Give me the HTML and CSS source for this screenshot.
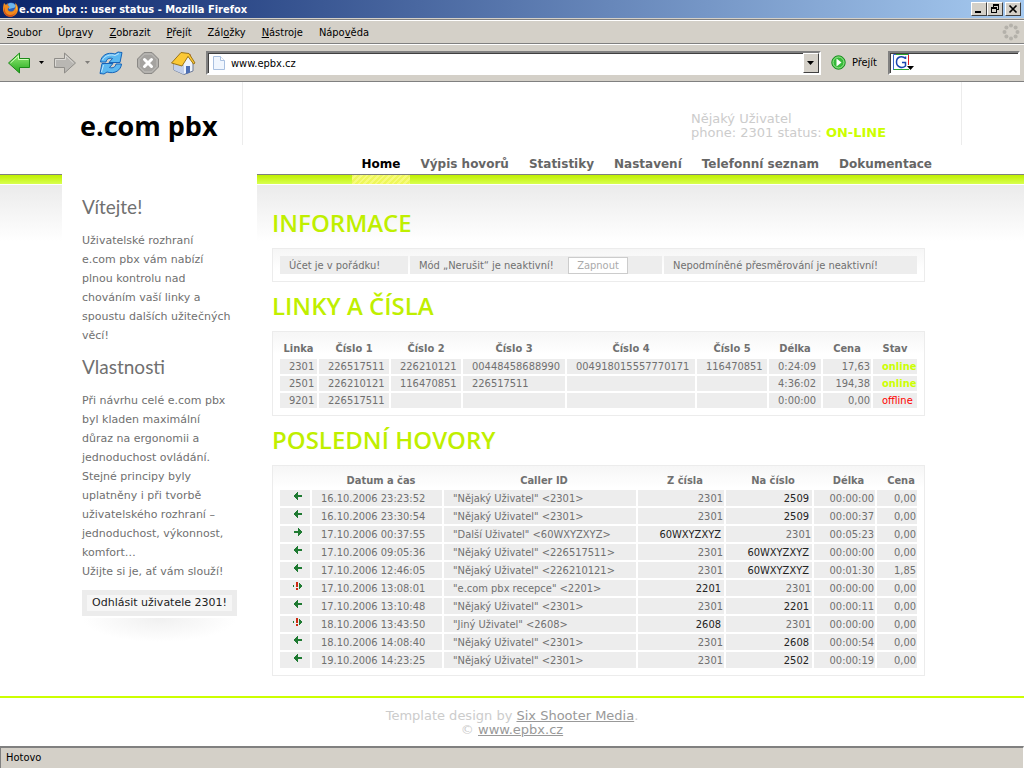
FILE: index.html
```html
<!DOCTYPE html>
<html lang="cs">
<head>
<meta charset="utf-8">
<title>e.com pbx :: user status</title>
<link rel="stylesheet" href="styles.css">
</head>
<body>
<div class="window">
  <div class="titlebar">
    <svg class="app-icon" width="17" height="17" viewBox="0 0 17 17" aria-hidden="true">
      <circle cx="9" cy="8" r="6.5" fill="#2b5fb8"/>
      <path d="M6 3c2-2 6-1 7 1 1 1 0 3-2 3-2 0-2 1-4 1z" fill="#6db5ec"/>
      <path d="M2 2l2 2 2-2c-1 2 0 3 2 4-1 1-3 1-2 3s5 2 6 0c2-2 2-5 1-7 3 2 4 6 2 10-2 3-6 5-10 3C1 13 0 8 2 2z" fill="#f08a1c"/>
      <path d="M3 6c-1 4 1 8 5 8 3 0 5-1 6-4-1 5-5 7-9 5-3-2-4-6-2-9z" fill="#d0501a"/>
      <path d="M13 3c2 2 2 4 1 7 0-3 0-5-1-7z" fill="#ffd75a"/>
    </svg>
    <span class="window-title">e.com pbx :: user status - Mozilla Firefox</span>
    <div class="window-buttons">
      <button class="win-btn" type="button" aria-label="Minimalizovat"><svg width="12" height="10" viewBox="0 0 12 10"><path d="M2 7h6v2H2z"/></svg></button>
      <button class="win-btn" type="button" aria-label="Obnovit"><svg width="12" height="10" viewBox="0 0 12 10"><path d="M4 0h6v6H8V5h1V2H5v1H4zM2 3h6v6H2zM3 5v3h4V5z" fill-rule="evenodd"/></svg></button>
      <button class="win-btn win-close" type="button" aria-label="Zavřít"><svg width="12" height="10" viewBox="0 0 12 10"><path d="M2.500 1.500l7 7M9.500 1.500l-7 7" stroke="#000" stroke-width="1.700"/></svg></button>
    </div>
  </div>

  <div class="menubar">
    <button type="button"><u>S</u>oubor</button>
    <button type="button">Úpr<u>a</u>vy</button>
    <button type="button"><u>Z</u>obrazit</button>
    <button type="button"><u>P</u>řejít</button>
    <button type="button">Zál<u>o</u>žky</button>
    <button type="button"><u>N</u>ástroje</button>
    <button type="button">Nápo<u>v</u>ěda</button>
    <svg class="throbber" width="18" height="18" viewBox="0 0 18 18" fill="#b4b1aa" aria-hidden="true">
      <circle cx="9" cy="2.500" r="2"/><circle cx="13.600" cy="4.400" r="2"/><circle cx="15.500" cy="9" r="2"/><circle cx="13.600" cy="13.600" r="2"/>
      <circle cx="9" cy="15.500" r="2"/><circle cx="4.400" cy="13.600" r="2"/><circle cx="2.500" cy="9" r="2"/><circle cx="4.400" cy="4.400" r="2"/>
    </svg>
  </div>

  <div class="toolbar">
    <button class="tool" type="button" aria-label="Zpět">
      <svg width="24" height="24" viewBox="0 0 24 24"><defs><linearGradient id="gb" x2="0" y2="1"><stop offset="0" stop-color="#9cf07c"/><stop offset="1" stop-color="#22a81c"/></linearGradient></defs><path d="M1.500 12L12.500 2v5.500H22.500v9H12.500V22z" fill="url(#gb)" stroke="#1d8a1a" stroke-linejoin="round"/><path d="M3.500 12l8-7.200v3.700h10" fill="none" stroke="#d2ffbe"/></svg>
    </button>
    <button class="drop" type="button" aria-label="Historie zpět"><svg width="5" height="3" viewBox="0 0 5 3"><path d="M0 0h5L2.500 3z"/></svg></button>
    <button class="tool" type="button" aria-label="Vpřed">
      <svg width="24" height="24" viewBox="0 0 24 24"><path d="M22.500 12L11.500 2v5.500H1.500v9h10V22z" fill="#b9b7b3" stroke="#8f8d89" stroke-linejoin="round"/><path d="M2.500 15V8.500h10v-4l8 7.500" fill="none" stroke="#dcdad6"/></svg>
    </button>
    <button class="drop" type="button" aria-label="Historie vpřed"><svg width="5" height="3" viewBox="0 0 5 3"><path fill="#807e7a" d="M0 0h5L2.500 3z"/></svg></button>
    <button class="tool tool-reload" type="button" aria-label="Obnovit stránku">
      <svg width="24" height="24" viewBox="0 0 24 24"><g fill="#5cb8f0" stroke="#1563b8" stroke-linejoin="round"><path d="M1.500 11C2 5 8 .500 16 3l3-2 4 .500-2 10H10l3.500-4C10 6.500 7.500 8 7 11z"/><path d="M22.500 13c-.500 6-6.500 10.500-14.500 8l-3 2-4-.500 2-10h11L10.500 16.500c3.500 1 6-.500 6.500-3.500z"/></g><path d="M3.500 9C6 4.500 11 3 16 4.500l4-2M4.500 14l-2 7" fill="none" stroke="#bfe6ff"/></svg>
    </button>
    <button class="tool" type="button" aria-label="Zastavit">
      <svg width="24" height="24" viewBox="0 0 24 24"><path d="M8 1.500h8L22.500 8v8L16 22.500H8L1.500 16V8z" fill="#a5a3a0" stroke="#8a8885"/><path d="M8.500 3h7L21 8.500v7L15.500 21h-7L3 15.500v-7z" fill="none" stroke="#c3c1bd"/><path d="M8.500 8.500l7 7M15.500 8.500l-7 7" stroke="#fff" stroke-width="3" stroke-linecap="round"/></svg>
    </button>
    <button class="tool" type="button" aria-label="Domů">
      <svg width="26" height="24" viewBox="0 0 26 24"><path d="M4 12v7l10 4.500L23 20V10l-5-5z" fill="#eef3fb" stroke="#6c7a98"/><path d="M4 12v7l10 4.500V14z" fill="#c3d0ea"/><path d="M17 6h4V3.500h-3z" fill="#b55532"/><path d="M1.500 12L11 1.500l8 1L25 12l-1.500 1L18 5.500l-6 9.500z" fill="#fbc936" stroke="#9a7418" stroke-linejoin="round"/><path d="M16 15h4v6.500l-4 1.500z" fill="#4d6fb4"/></svg>
    </button>
    <div class="urlbox">
      <svg width="14" height="16" viewBox="0 0 14 16" aria-hidden="true"><path d="M1.500 1.500h7l4 4v9h-11z" fill="#f0f6fe" stroke="#a9c0e0"/><path d="M8.500 1.500v4h4" fill="#fff" stroke="#a9c0e0"/></svg>
      <input type="text" aria-label="Adresa" value="www.epbx.cz">
      <button class="url-drop" type="button" aria-label="Seznam adres"><svg width="7" height="4" viewBox="0 0 7 4"><path d="M0 0h7L3.500 4z"/></svg></button>
    </div>
    <button class="go" type="button">
      <svg width="15" height="15" viewBox="0 0 15 15" aria-hidden="true"><circle cx="7.500" cy="7.500" r="6.700" fill="#37b93a" stroke="#178a1d"/><circle cx="7.500" cy="7.500" r="5.500" fill="none" stroke="#9be890"/><path d="M5.500 3.500l5 4-5 4z" fill="#fff"/></svg>
      <span>Přejít</span>
    </button>
    <div class="searchbox">
      <svg width="22" height="17" viewBox="0 0 22 17" aria-hidden="true"><path d="M.500 16V.500H16" fill="none" stroke="#3a66c8"/><path d="M1 15.500h15" stroke="#2ea52e"/><path d="M15.500 1v10" stroke="#e02020"/><path d="M3 .500h12" stroke="#2ea52e"/><path d="M12.500 5V2.500M12.500 4.500C9 1 3.500 3 3.500 8s5.500 7 9 4V8.500H9" fill="none" stroke="#1b46ae" stroke-width="1.500"/><path d="M14 12h7l-3.500 4z"/></svg>
      <input type="text" aria-label="Hledat">
    </div>
  </div>

  <div class="page">
    <header class="masthead">
      <div class="wrap masthead-top">
        <h1 class="brand">e.com pbx</h1>
        <p class="user">Nějaký Uživatel<br>phone: 2301 status: <strong>ON-LINE</strong></p>
      </div>
      <nav class="wrap nav">
        <a class="current" href="#home">Home</a>
        <a href="#calls">Výpis hovorů</a>
        <a href="#stats">Statistiky</a>
        <a href="#settings">Nastavení</a>
        <a href="#phonebook">Telefonní seznam</a>
        <a href="#docs">Dokumentace</a>
      </nav>
    </header>

    <div class="stage">
      <div class="wrap columns">
        <aside class="sidebar">
          <h2>Vítejte!</h2>
          <p>Uživatelské rozhraní<br>e.com pbx vám nabízí<br>plnou kontrolu nad<br>chováním vaší linky a<br>spoustu dalších užitečných<br>věcí!</p>
          <h2>Vlastnosti</h2>
          <p>Při návrhu celé e.com pbx<br>byl kladen maximální<br>důraz na ergonomii a<br>jednoduchost ovládání.<br>Stejné principy byly<br>uplatněny i při tvorbě<br>uživatelského rozhraní –<br>jednoduchost, výkonnost,<br>komfort…<br>Užijte si je, ať vám slouží!</p>
          <button class="logout" type="button">Odhlásit uživatele 2301!</button>
          <div class="glow"></div>
        </aside>

        <main class="content">
          <h2>INFORMACE</h2>
          <section class="panel info">
            <div class="info-cell">Účet je v pořádku!</div>
            <div class="info-cell"><span class="info-text">Mód „Nerušit“ je neaktivní!</span><button class="toggle" type="button">Zapnout</button></div>
            <div class="info-cell">Nepodmíněné přesměrování je neaktivní!</div>
          </section>

          <h2>LINKY A ČÍSLA</h2>
          <section class="panel">
            <table class="grid lines">
              <colgroup><col class="w37"><col class="w70"><col class="w70"><col class="w102"><col class="w128"><col class="w70"><col class="w52"><col class="w48"><col class="w44"></colgroup>
              <thead><tr><th>Linka</th><th>Číslo 1</th><th>Číslo 2</th><th>Číslo 3</th><th>Číslo 4</th><th>Číslo 5</th><th>Délka</th><th>Cena</th><th>Stav</th></tr></thead>
              <tbody>
                <tr><td>2301</td><td>226517511</td><td>226210121</td><td>00448458688990</td><td>004918015557770171</td><td>116470851</td><td>0:24:09</td><td class="num">17,63</td><td class="online">online</td></tr>
                <tr><td>2501</td><td>226210121</td><td>116470851</td><td>226517511</td><td></td><td></td><td>4:36:02</td><td class="num">194,38</td><td class="online">online</td></tr>
                <tr><td>9201</td><td>226517511</td><td></td><td></td><td></td><td></td><td>0:00:00</td><td class="num">0,00</td><td class="offline">offline</td></tr>
              </tbody>
            </table>
          </section>

          <h2>POSLEDNÍ HOVORY</h2>
          <section class="panel">
            <svg class="defs" width="0" height="0" aria-hidden="true">
              <symbol id="left" viewBox="0 0 10 9"><path fill="#1f7a32" d="M1 3h1V2h1V1h1V0h1v3h4v2H5v3H4V7H3V6H2V5H1z"/></symbol>
              <symbol id="right" viewBox="0 0 10 9"><path fill="#1f7a32" d="M9 3H8V2H7V1H6V0H5v3H1v2h4v3h1V7h1V6h1V5h1z"/></symbol>
              <symbol id="missed" viewBox="0 0 10 9"><path fill="#1f7a32" d="M0 3h1v2H0zM6 1h1v1h1v1h1v2H8v1H7v1H6z"/><path fill="#cc2a10" d="M3 0h2v5H3zM3 6h2v2H3z"/></symbol>
            </svg>
            <table class="grid calls">
              <colgroup><col class="w30"><col class="w130"><col class="w192"><col class="w86"><col class="w86"><col class="w61"><col class="w40"></colgroup>
              <thead><tr><th></th><th>Datum a čas</th><th>Caller ID</th><th>Z čísla</th><th>Na číslo</th><th>Délka</th><th>Cena</th></tr></thead>
              <tbody>
                <tr><td><svg><use href="#left"/></svg></td><td>16.10.2006 23:23:52</td><td>"Nějaký Uživatel" &lt;2301&gt;</td><td class="num">2301</td><td class="num ext">2509</td><td class="num">00:00:00</td><td class="num">0,00</td></tr>
                <tr><td><svg><use href="#left"/></svg></td><td>16.10.2006 23:30:54</td><td>"Nějaký Uživatel" &lt;2301&gt;</td><td class="num">2301</td><td class="num ext">2509</td><td class="num">00:00:37</td><td class="num">0,00</td></tr>
                <tr><td><svg><use href="#right"/></svg></td><td>17.10.2006 00:37:55</td><td>"Další Uživatel" &lt;60WXYZXYZ&gt;</td><td class="num ext">60WXYZXYZ</td><td class="num">2301</td><td class="num">00:05:23</td><td class="num">0,00</td></tr>
                <tr><td><svg><use href="#left"/></svg></td><td>17.10.2006 09:05:36</td><td>"Nějaký Uživatel" &lt;226517511&gt;</td><td class="num">2301</td><td class="num ext">60WXYZXYZ</td><td class="num">00:00:00</td><td class="num">0,00</td></tr>
                <tr><td><svg><use href="#left"/></svg></td><td>17.10.2006 12:46:05</td><td>"Nějaký Uživatel" &lt;226210121&gt;</td><td class="num">2301</td><td class="num ext">60WXYZXYZ</td><td class="num">00:01:30</td><td class="num">1,85</td></tr>
                <tr><td><svg><use href="#missed"/></svg></td><td>17.10.2006 13:08:01</td><td>"e.com pbx recepce" &lt;2201&gt;</td><td class="num ext">2201</td><td class="num">2301</td><td class="num">00:00:00</td><td class="num">0,00</td></tr>
                <tr><td><svg><use href="#left"/></svg></td><td>17.10.2006 13:10:48</td><td>"Nějaký Uživatel" &lt;2301&gt;</td><td class="num">2301</td><td class="num ext">2201</td><td class="num">00:00:11</td><td class="num">0,00</td></tr>
                <tr><td><svg><use href="#missed"/></svg></td><td>18.10.2006 13:43:50</td><td>"Jiný Uživatel" &lt;2608&gt;</td><td class="num ext">2608</td><td class="num">2301</td><td class="num">00:00:00</td><td class="num">0,00</td></tr>
                <tr><td><svg><use href="#left"/></svg></td><td>18.10.2006 14:08:40</td><td>"Nějaký Uživatel" &lt;2301&gt;</td><td class="num">2301</td><td class="num ext">2608</td><td class="num">00:00:54</td><td class="num">0,00</td></tr>
                <tr><td><svg><use href="#left"/></svg></td><td>19.10.2006 14:23:25</td><td>"Nějaký Uživatel" &lt;2301&gt;</td><td class="num">2301</td><td class="num ext">2502</td><td class="num">00:00:19</td><td class="num">0,00</td></tr>
              </tbody>
            </table>
          </section>
        </main>
      </div>
    </div>

    <footer class="footer">
      <p>Template design by <a href="#sixshooter">Six Shooter Media</a>.<br>© <a href="#epbx">www.epbx.cz</a></p>
    </footer>
  </div>

  <div class="statusbar">Hotovo</div>
</div>
</body>
</html>
```

FILE: styles.css
```css
* { box-sizing: border-box; }

body, h1, h2, p { margin: 0; }

body {
  background: #fff;
  color: #707070;
  font: 11px "DejaVu Sans Condensed", "DejaVu Sans", sans-serif;
}

button, input { font: inherit; color: inherit; }

button {
  background: none;
  border: 0;
  padding: 0;
  white-space: nowrap;
}

.window {
  display: flex;
  flex-direction: column;
  min-height: 100vh;
}

/* Browser chrome */

.titlebar {
  display: flex;
  align-items: center;
  height: 19px;
  padding: 0 3px 0 2px;
  border-bottom: 1px solid #d4d0c8;
  background: linear-gradient(to right, #0a246a, #a6caf0);
  color: #fff;
}

.window-title { font-weight: bold; }

.window-buttons { display: flex; margin-left: auto; }

.win-btn {
  display: flex;
  width: 16px;
  height: 14px;
  padding: 1px;
  background: #d4d0c8;
  border: 1px solid;
  border-color: #fff #404040 #404040 #fff;
}

.win-close { margin-left: 2px; }

.menubar {
  display: flex;
  align-items: center;
  gap: 16px;
  height: 25px;
  padding: 1px 4px 0 7px;
  background: #d4d0c8;
  border-top: 1px solid #808080;
  border-bottom: 1px solid #808080;
  box-shadow: inset 0 1px #fff;
  color: #000;
}

.throbber { margin-left: auto; }

.toolbar {
  display: flex;
  align-items: center;
  height: 38px;
  padding: 0 4px 0 7px;
  background: #d4d0c8;
  border-bottom: 1px solid #808080;
  box-shadow: inset 0 1px #fff;
  color: #000;
}

.tool { display: flex; }

.drop { display: flex; padding: 0 9px 0 8px; }

.tool-reload { margin-right: 13px; }

.tool + .tool { margin-right: 10px; }

.urlbox, .searchbox {
  display: flex;
  align-items: center;
  height: 24px;
  background: #fff;
  border: 2px solid;
  border-color: #808080 #fff #fff #808080;
  box-shadow: inset 1px 1px #404040;
}

.urlbox { flex: 1; padding-left: 4px; }

.urlbox input, .searchbox input {
  min-width: 0;
  flex: 1;
  border: 0;
  outline: 0;
  background: none;
}

.urlbox input { padding: 1px 5px 0; }

.url-drop {
  display: flex;
  align-items: center;
  justify-content: center;
  width: 16px;
  height: 20px;
  background: #d4d0c8;
  border: 1px solid;
  border-color: #fff #404040 #404040 #fff;
}

.go {
  display: flex;
  align-items: center;
  gap: 6px;
  padding: 0 11px 0 10px;
}

.searchbox { width: 132px; padding-left: 3px; }

.statusbar {
  height: 22px;
  padding: 0 5px;
  background: #d4d0c8;
  border: 1px solid #808080;
  border-top-width: 2px;
  border-right-color: #fff;
  border-bottom: 0;
  color: #000;
  line-height: 20px;
}

/* Page */

.page { flex: 1; }

.wrap { max-width: 900px; margin: 0 auto; }

.masthead-top {
  display: flex;
  justify-content: space-between;
  height: 63px;
  border-right: 1px solid #ececec;
}

.brand {
  width: 181px;
  padding: 24px 0 0 18px;
  border-right: 1px solid #ececec;
  color: #000;
  font: 700 27px/40px "Open Sans", sans-serif;
}

.user {
  width: 270px;
  padding-top: 30px;
  color: #ccc;
  font: 13px/14px "DejaVu Sans", sans-serif;
}

.user strong { color: #cf0; }

.nav {
  display: flex;
  justify-content: flex-end;
  height: 29px;
  padding-right: 20px;
}

.nav a {
  position: relative;
  padding: 11px 10px 0;
  color: #666;
  font: bold 12px/16px "DejaVu Sans", sans-serif;
  text-decoration: none;
}

.nav .current { color: #000; }

.nav .current::after {
  content: "";
  position: absolute;
  top: 30px;
  left: 0;
  right: 0;
  height: 9px;
  background: repeating-linear-gradient(135deg, #eef75a 0 2px, #f6fb7c 2px 4px);
}

.stage {
  background:
    linear-gradient(#808080, #808080) 0 0 / 100% 1px no-repeat,
    linear-gradient(#c0f000, #d8ff50) 0 1px / 100% 9px no-repeat,
    linear-gradient(#ebebeb, #fff) 0 11px / 100% 56px no-repeat;
}

.columns { display: flex; }

.sidebar {
  flex: 0 0 195px;
  padding: 11px 20px 0;
  background: #fff;
  font: 11px/19px "DejaVu Sans", sans-serif;
  white-space: nowrap;
}

.sidebar h2 {
  color: #707070;
  font: 400 19px/44px Lato, sans-serif;
  padding-bottom: 2px;
}

.logout {
  display: block;
  width: 155px;
  height: 26px;
  margin-top: 9px;
  background: #f6f6f6;
  border: 5px solid #ececec;
  color: #222;
  line-height: 16px;
}

.glow {
  width: 155px;
  height: 24px;
  margin-top: 2px;
  background: radial-gradient(ellipse 50% 100% at 50% 0, #f0f0f0, #fff);
}

.content {
  flex: 1;
  min-width: 0;
  padding: 25px 37px 20px 15px;
}

.content h2 {
  padding-bottom: 2px;
  color: #bfef00;
  font: 600 24px/47px "Open Sans", sans-serif;
}

.panel {
  padding: 7px;
  border: 1px solid #ececec;
  background: linear-gradient(#f6f6f6, #fff 22px);
}

.info {
  display: grid;
  grid-template-columns: 128fr 252fr 253fr;
  gap: 2px;
}

.info-cell {
  display: flex;
  align-items: center;
  gap: 4px;
  height: 18px;
  padding-left: 9px;
  background: #ededed;
  white-space: nowrap;
}

.info-text { min-width: 145px; }

.toggle {
  width: 60px;
  height: 17px;
  background: #fff;
  border: 1px solid #ccc;
  color: #aaa;
}

.grid {
  width: 100%;
  table-layout: fixed;
  border-spacing: 2px;
  line-height: 15px;
}

.panel:has(.grid) { padding: 5px; }

.grid th { padding: 0; text-align: center; }

.grid td {
  height: 15px;
  padding: 0 0 0 9px;
  background: #ededed;
  white-space: nowrap;
}

.grid .num { padding: 0 1px 0 0; text-align: right; }

.lines th { height: 18px; }

.calls th { height: 15px; padding-left: 8px; }

.calls td { height: 16px; }

.calls .ext { padding-right: 3px; color: #222; }

.calls svg { display: block; width: 10px; height: 9px; margin: 0 0 3px 4px; }

.defs { display: block; }

.grid .online { color: #cf0; font-weight: bold; }

.grid .offline { color: #f00; }

.w30 { width: 30px; }
.w37 { width: 37px; }
.w40 { width: 40px; }
.w44 { width: 44px; }
.w48 { width: 48px; }
.w52 { width: 52px; }
.w61 { width: 61px; }
.w70 { width: 70px; }
.w86 { width: 86px; }
.w102 { width: 102px; }
.w128 { width: 128px; }
.w130 { width: 130px; }
.w192 { width: 192px; }

.footer {
  padding: 11px 0 8px;
  border-top: 2px solid #cf0;
  color: #ccc;
  font: 13px/14px "DejaVu Sans", sans-serif;
  text-align: center;
}

.footer a { color: #999; }
```
